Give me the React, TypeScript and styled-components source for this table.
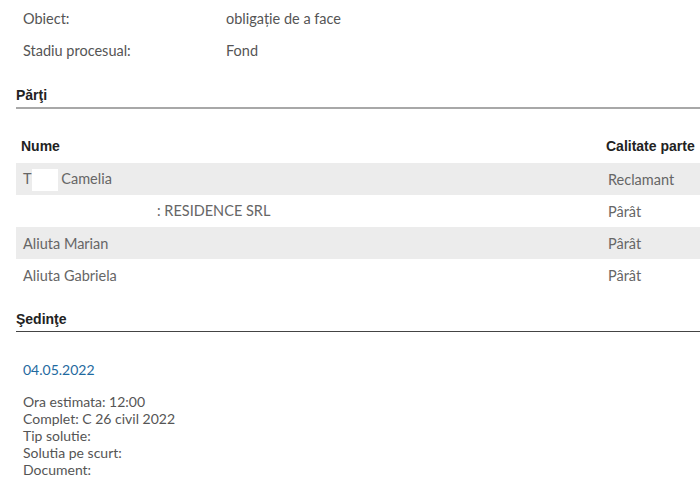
import React from 'react';
import styled, { createGlobalStyle } from 'styled-components';

const GlobalStyle = createGlobalStyle`
  html, body {
    margin: 0;
    padding: 0;
    background: #fff;
  }
  body {
    font-family: Lato, 'Noto Sans', sans-serif;
    color: #555;
  }
`;

const Page = styled.div`
  width: 700px;
  height: 487px;
  overflow: hidden;
  padding-left: 16px;
  box-sizing: border-box;
`;

const InfoTable = styled.div`
  display: grid;
  grid-template-columns: 203px 1fr;
  padding: 8px 0 0 7px;
  row-gap: 10px;
  font-size: 14.5px;
  line-height: 22px;
`;

const SectionTitle = styled.h3<{ $line: string; $thick?: boolean }>`
  margin: 0;
  font-family: 'Liberation Sans', Arial, sans-serif;
  font-weight: bold;
  font-size: 14px;
  color: #222;
  padding-bottom: 4px;
  border-bottom: ${(p) => (p.$thick ? '2px' : '1px')} solid ${(p) => p.$line};
`;

const PartiTitle = styled(SectionTitle)`
  margin-top: 25px;
`;

const SedinteTitle = styled(SectionTitle)`
  margin-top: 20px;
`;

const PartyTable = styled.div`
  margin-top: 28px;
`;

const HeadRow = styled.div`
  display: grid;
  grid-template-columns: 1fr 94px;
  padding: 0 0 8px 5px;
  font-family: 'Liberation Sans', Arial, sans-serif;
  font-weight: bold;
  font-size: 14px;
  color: #222;
  line-height: 18px;
`;

const Row = styled.div<{ $shaded: boolean }>`
  display: grid;
  grid-template-columns: 1fr 92px;
  height: 32px;
  align-items: center;
  padding-left: 7px;
  padding-top: 1px;
  box-sizing: border-box;
  font-size: 14.5px;
  color: #666;
  background: ${(p) => (p.$shaded ? '#ececec' : '#fff')};
`;

const Redact = styled.span<{ $w: number }>`
  display: inline-block;
  width: ${(p) => p.$w}px;
  height: 22px;
  vertical-align: middle;
  background: #fff;
`;

const Sitting = styled.div`
  padding: 27px 0 0 7px;
  font-size: 14px;
`;

const SittingDate = styled.div`
  color: #1f6aa0;
  line-height: 22px;
`;

const Details = styled.div`
  margin-top: 12px;
  line-height: 17px;
  color: #555;
`;

const parties = [
  { name: <>T<Redact $w={26} /> Camelia</>, role: 'Reclamant' },
  { name: <><Redact $w={134} />: RESIDENCE SRL</>, role: 'Pârât' },
  { name: <>Aliuta Marian</>, role: 'Pârât' },
  { name: <>Aliuta Gabriela</>, role: 'Pârât' },
];

export default function App() {
  return (
    <>
      <GlobalStyle />
      <Page>
        <InfoTable>
          <span>Obiect:</span>
          <span>obligație de a face</span>
          <span>Stadiu procesual:</span>
          <span>Fond</span>
        </InfoTable>

        <PartiTitle $line="#a8a8a8" $thick>Părţi</PartiTitle>
        <PartyTable>
          <HeadRow>
            <span>Nume</span>
            <span>Calitate parte</span>
          </HeadRow>
          {parties.map((p, i) => (
            <Row key={i} $shaded={i % 2 === 0}>
              <span>{p.name}</span>
              <span>{p.role}</span>
            </Row>
          ))}
        </PartyTable>

        <SedinteTitle $line="#444">Şedinţe</SedinteTitle>
        <Sitting>
          <SittingDate>04.05.2022</SittingDate>
          <Details>
            Ora estimata: 12:00
            <br />
            Complet: C 26 civil 2022
            <br />
            Tip solutie:
            <br />
            Solutia pe scurt:
            <br />
            Document:
          </Details>
        </Sitting>
      </Page>
    </>
  );
}
